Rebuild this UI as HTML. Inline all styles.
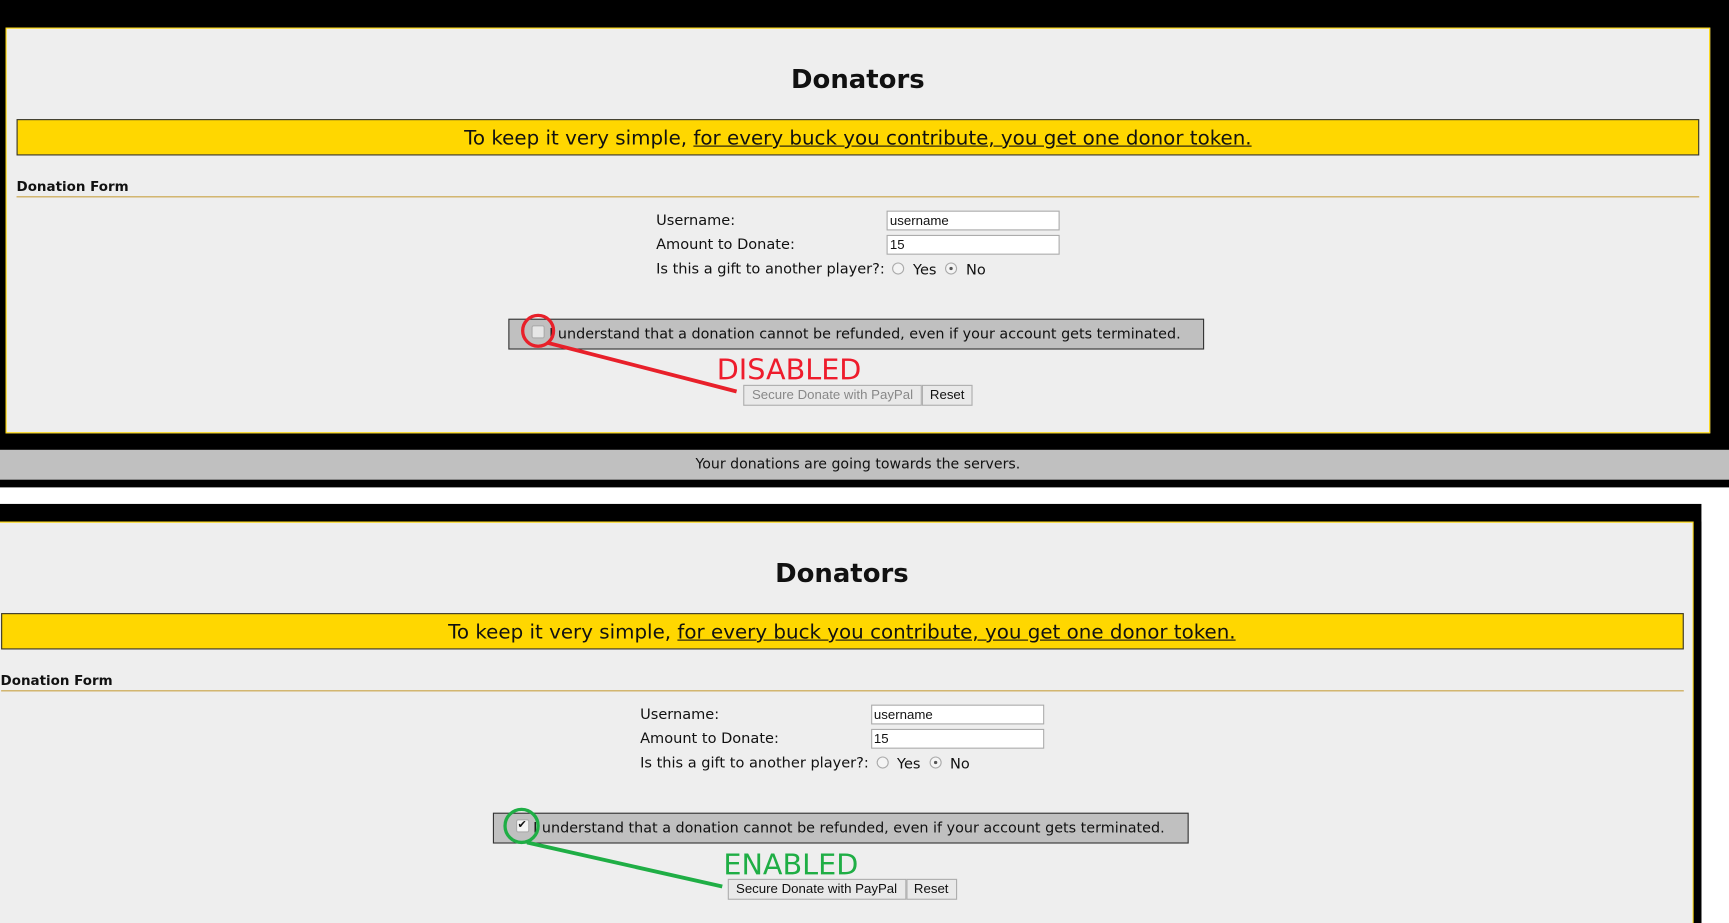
<!DOCTYPE html>
<html><head><meta charset="utf-8"><style>
*{margin:0;padding:0;box-sizing:border-box}
html,body{width:1729px;height:922px;overflow:hidden;background:#eee}
#w{position:absolute;left:0;top:0;width:1568px;height:837px;overflow:hidden;transform:scale(1.10268);transform-origin:0 0;font-family:"DejaVu Sans","Liberation Sans",sans-serif;color:#111}
.a{position:absolute}
.panel{position:absolute;background:#eeeeee;border:1px solid #ffd700}
.t{position:absolute;white-space:nowrap}
.inp{position:absolute;width:157px;height:18px;background:#fff;border:1px solid #aaa;font:12px "Liberation Sans",Arial,sans-serif;padding:1px 2px;line-height:14px}
.radio{position:absolute;width:11px;height:11px;border-radius:50%;border:1px solid #aaa;background:#f4f4f4}
.btn{position:absolute;height:19px;border:1px solid #adadad;background:#e9e9e9;font:12px "Liberation Sans",Arial,sans-serif;text-align:center;line-height:17px}
.l{font-size:13.2px}
</style></head><body><div id="w">
<div class="a" style="left:0;top:0;width:1568px;height:837px;background:#fff"></div>
<div class="a" style="left:0;top:0;width:1568px;height:408px;background:#000"></div>
<div class="a" style="left:0;top:408px;width:1568px;height:27px;background:#c0c0c0"></div>
<div class="t" style="left:0;width:1556px;text-align:center;top:414px;font-size:12.8px">Your donations are going towards the servers.</div>
<div class="a" style="left:0;top:435px;width:1568px;height:7px;background:#000"></div>
<div class="a" style="left:0;top:457px;width:1543px;height:400px;background:#000"></div>

<div class="panel" style="left:5px;top:25px;width:1546px;height:368px"></div>
<div class="panel" style="left:-1px;top:473px;width:1537px;height:400px"></div>

<div class="a" style="left:0;top:0">
<div class="t" style="left:0;width:1556px;text-align:center;top:58px;font-size:23.5px;font-weight:bold">Donators</div>
<div class="a" style="left:15px;top:108px;width:1526px;height:33px;background:#ffd700;border:1px solid #333"></div>
<div class="t" style="left:15px;width:1526px;text-align:center;top:115px;font-size:18px">To keep it very simple, <u>for every buck you contribute, you get one donor token.</u></div>
<div class="t" style="left:15px;top:162px;font-size:12.2px;font-weight:bold">Donation Form</div>
<div class="a" style="left:15px;top:178px;width:1526px;height:1px;background:#c8a040"></div>
<div class="t l" style="left:595px;top:193px">Username:</div>
<div class="t l" style="left:595px;top:215px">Amount to Donate:</div>
<div class="t l" style="left:595px;top:237px">Is this a gift to another player?:</div>
<div class="inp" style="left:804px;top:191px">username</div>
<div class="inp" style="left:804px;top:213px">15</div>
<div class="radio" style="left:809px;top:238px"></div>
<div class="t l" style="left:828px;top:238px">Yes</div>
<div class="radio" style="left:857px;top:238px"><div class="a" style="left:3px;top:3px;width:3px;height:3px;border-radius:50%;background:#555"></div></div>
<div class="t l" style="left:876px;top:238px">No</div>
<div class="a" style="left:461px;top:289px;width:631px;height:28px;background:#c0c0c0;border:1px solid #333"></div>
<div class="a" style="left:482px;top:295px;width:12px;height:12px;border:1px solid #aaa;background:#e6e6e6;border-radius:2px"></div>
<div class="t" style="left:498px;top:296px;font-size:13px">I understand that a donation cannot be refunded, even if your account gets terminated.</div>
<div class="btn" style="left:674px;top:349px;width:162px;color:#888">Secure Donate with PayPal</div>
<div class="btn" style="left:836px;top:349px;width:46px;color:#111">Reset</div>
</div>

<div class="a" style="left:-14.5px;top:448px;width:1568px;height:400px">
<div class="t" style="left:0;width:1556px;text-align:center;top:58px;font-size:23.5px;font-weight:bold">Donators</div>
<div class="a" style="left:15px;top:108px;width:1526px;height:33px;background:#ffd700;border:1px solid #333"></div>
<div class="t" style="left:15px;width:1526px;text-align:center;top:115px;font-size:18px">To keep it very simple, <u>for every buck you contribute, you get one donor token.</u></div>
<div class="t" style="left:15px;top:162px;font-size:12.2px;font-weight:bold">Donation Form</div>
<div class="a" style="left:15px;top:178px;width:1526px;height:1px;background:#c8a040"></div>
<div class="t l" style="left:595px;top:193px">Username:</div>
<div class="t l" style="left:595px;top:215px">Amount to Donate:</div>
<div class="t l" style="left:595px;top:237px">Is this a gift to another player?:</div>
<div class="inp" style="left:804px;top:191px">username</div>
<div class="inp" style="left:804px;top:213px">15</div>
<div class="radio" style="left:809px;top:238px"></div>
<div class="t l" style="left:828px;top:238px">Yes</div>
<div class="radio" style="left:857px;top:238px"><div class="a" style="left:3px;top:3px;width:3px;height:3px;border-radius:50%;background:#555"></div></div>
<div class="t l" style="left:876px;top:238px">No</div>
<div class="a" style="left:461px;top:289px;width:631px;height:28px;background:#c0c0c0;border:1px solid #333"></div>
<div class="a" style="left:482px;top:295px;width:12px;height:12px;border:1px solid #aaa;background:#f4f4f4;border-radius:2px;font-size:10px;line-height:10px;text-align:center">✔</div>
<div class="t" style="left:498px;top:296px;font-size:13px">I understand that a donation cannot be refunded, even if your account gets terminated.</div>
<div class="btn" style="left:674px;top:349px;width:162px;color:#111">Secure Donate with PayPal</div>
<div class="btn" style="left:836px;top:349px;width:46px;color:#111">Reset</div>
</div>

<div class="a" style="left:1536px;top:473px;width:7px;height:400px;background:#000"></div>

<svg class="a" style="left:0;top:0" width="1568" height="837">
<circle cx="488" cy="300" r="14" fill="none" stroke="#e8202a" stroke-width="3"/>
<line x1="497" y1="311" x2="668" y2="355" stroke="#e8202a" stroke-width="3.5"/>
<circle cx="473" cy="749" r="15" fill="none" stroke="#1fae45" stroke-width="3"/>
<line x1="478" y1="764" x2="655" y2="804" stroke="#1fae45" stroke-width="3.5"/>
<text x="650" y="344" font-family="DejaVu Sans, sans-serif" font-size="26" fill="#ee1c2c">DISABLED</text>
<text x="656" y="793" font-family="DejaVu Sans, sans-serif" font-size="26" fill="#1fae45">ENABLED</text>
</svg>
</div></body></html>
